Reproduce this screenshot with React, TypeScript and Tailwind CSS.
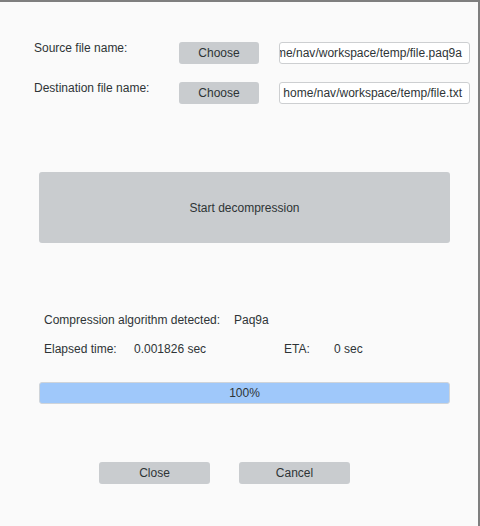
export default function App() {
  const font = { fontFamily: '"Liberation Sans", Arial, sans-serif' };
  return (
    <div
      style={font}
      className="w-[480px] h-[526px] bg-[#fafafa] border-t-2 border-r-2 border-[#7f7f7f] text-[12px] text-[#2e3436] flex flex-col overflow-hidden"
    >
      {/* file rows */}
      <div className="flex flex-col gap-[18px] pt-[40px] pl-[34px]">
        {[
          ["Source file name:", "/home/nav/workspace/temp/file.paq9a"],
          ["Destination file name:", "home/nav/workspace/temp/file.txt"],
        ].map(([label, path]) => (
          <div key={label} className="flex items-start">
            <div className="w-[145px] leading-[14px] -mt-px">{label}</div>
            <button className="w-[80px] h-[22px] rounded-[3px] bg-[#c9cccf] leading-[22px] text-center text-[12px]">
              Choose
            </button>
            <div className="ml-[20px] w-[191px] h-[22px] rounded-[3px] border border-[#cdcfd1] bg-white flex justify-end items-center overflow-hidden pr-[7px] whitespace-nowrap">
              <span className="shrink-0 tracking-[0.02px]">{path}</span>
            </div>
          </div>
        ))}
      </div>

      {/* big button */}
      <div className="pl-[39px] mt-[68px]">
        <button className="w-[411px] h-[71px] rounded-[3px] bg-[#c9cccf] flex items-center justify-center text-[12px]">
          Start decompression
        </button>
      </div>

      {/* info */}
      <div className="pl-[44px] mt-[70px] flex flex-col gap-[15px] leading-[14px]">
        <div className="flex">
          <div className="w-[190px] whitespace-nowrap">Compression algorithm detected:</div>
          <div>Paq9a</div>
        </div>
        <div className="flex">
          <div className="w-[90px]">Elapsed time:</div>
          <div className="w-[150px]">0.001826 sec</div>
          <div className="w-[50px]">ETA:</div>
          <div>0 sec</div>
        </div>
      </div>

      {/* progress */}
      <div className="pl-[39px] mt-[26px]">
        <div className="w-[411px] h-[22px] rounded-[3px] border border-[#cfd4d9] bg-[#9fc8fa] flex items-center justify-center">
          100%
        </div>
      </div>

      {/* bottom buttons */}
      <div className="pl-[99px] mt-[58px] flex gap-[29px]">
        <button className="w-[111px] h-[22px] rounded-[3px] bg-[#c9cccf] text-[12px] leading-[22px]">Close</button>
        <button className="w-[111px] h-[22px] rounded-[3px] bg-[#c9cccf] text-[12px] leading-[22px]">Cancel</button>
      </div>
    </div>
  );
}
